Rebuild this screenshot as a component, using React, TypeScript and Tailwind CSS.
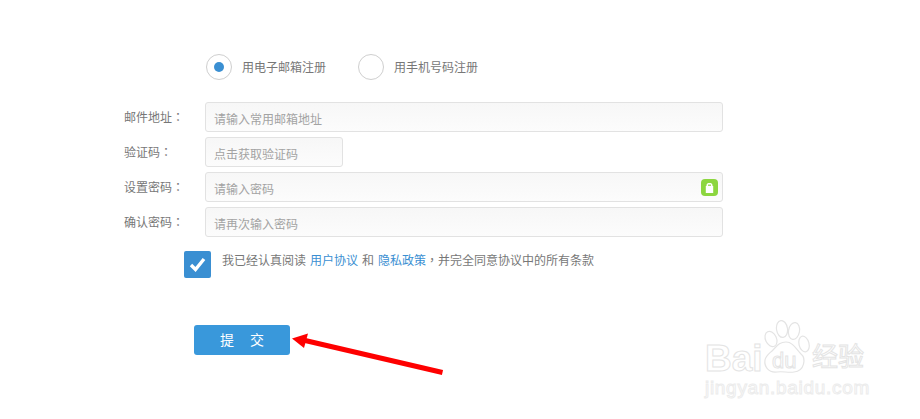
import React from 'react';

const cjk = "font-['Liberation_Sans','Noto_Sans_CJK_SC',sans-serif]";
// TC centres its full-width punctuation, the way the picture has it
const punct = "font-['Noto_Sans_CJK_TC',sans-serif]";

const fields = [
    { label: '邮件地址', placeholder: '请输入常用邮箱地址', width: 'w-[518px]' },
    { label: '验证码', placeholder: '点击获取验证码', width: 'w-[138px]' },
    { label: '设置密码', placeholder: '请输入密码', width: 'w-[518px]', lock: true },
    { label: '确认密码', placeholder: '请再次输入密码', width: 'w-[518px]' },
];

const Radio: React.FC<{ label: string; checked?: boolean; className?: string }> = ({ label, checked, className }) => (
    <div className={`flex items-center gap-[10px] ${className ?? ''}`}>
        <div className="w-[26px] h-[26px] rounded-full border border-[#cfcfcf] flex items-center justify-center">
            {checked && <div className="w-[10px] h-[10px] rounded-full bg-[#3a8fd2]" />}
        </div>
        <span className="text-xs text-[#777] mt-[2px]">{label}</span>
    </div>
);

const Watermark: React.FC = () => (
    <div className="absolute left-[704px] top-[320px] w-[180px] h-[80px] pointer-events-none font-['Liberation_Sans','Noto_Sans_CJK_SC',sans-serif] text-white">
        <span className="absolute left-[1px] top-[19px] text-[37px] leading-[40px] font-bold [-webkit-text-stroke:1px_#e4e4e4]">Bai</span>
        <svg className="absolute left-[56px] top-0" width="54" height="54" viewBox="0 0 54 54" fill="#fff" stroke="#e4e4e4" strokeWidth="1.2">
            <ellipse cx="11" cy="19" rx="5.5" ry="8" transform="rotate(-25 11 19)" />
            <ellipse cx="22" cy="9" rx="5.5" ry="8.5" transform="rotate(-8 22 9)" />
            <ellipse cx="34" cy="11" rx="5.5" ry="8.5" transform="rotate(10 34 11)" />
            <ellipse cx="44" cy="24" rx="5" ry="8" transform="rotate(-15 44 24)" />
            <path d="M26 22c7 0 10 7 15 12 5 4 4 17-7 18-6 1-11-1-17 0-9 1-13-6-12-12 1-5 5-7 8-10 4-4 6-8 13-8z" />
        </svg>
        <span className="absolute left-[68px] top-[29px] text-[22px] leading-[24px] [-webkit-text-stroke:1px_#e4e4e4]">du</span>
        <span className="absolute left-[108px] top-[20px] text-[26px] leading-[34px] whitespace-nowrap [-webkit-text-stroke:1px_#e4e4e4]">经验</span>
        <span className="absolute left-[1px] top-[57px] text-[19px] leading-[22px] whitespace-nowrap [-webkit-text-stroke:1px_#ececec] tracking-[0.7px]">jingyan.baidu.com</span>
    </div>
);

export default function App() {
    return (
        <div className={`relative w-[920px] h-[419px] bg-white overflow-hidden ${cjk}`}>
            <div className="pt-[54px] pl-[206px] flex items-center">
                <Radio label="用电子邮箱注册" checked />
                <Radio label="用手机号码注册" className="ml-[32px]" />
            </div>

            <div className="mt-[22px] flex flex-col gap-[5px]">
                {fields.map(field => (
                    <div key={field.label} className="flex items-center pl-[124px]">
                        <span className="w-[81px] text-xs text-[#777]">
                            {field.label}<span className={punct}>：</span>
                        </span>
                        <div className={`relative h-[30px] ${field.width} rounded-[3px] border border-[#e2e2e2] bg-gradient-to-b from-[#f7f7f7] to-[#fcfcfc] flex items-center pl-[8px]`}>
                            <span className="text-xs text-[#a3a3a3] mt-[5px]">{field.placeholder}</span>
                            {field.lock && (
                                <div className="absolute right-[4px] top-[6px] w-[17px] h-[17px] rounded-[4px] bg-[#8cd63f] flex items-center justify-center">
                                    <svg width="11" height="12" viewBox="0 0 11 12">
                                        <path d="M2.5 4V3.2C2.5 1.6 3.8 1 5.5 1s3 .6 3 2.2V4h.7v7H1.8V4z" fill="#fff" />
                                        <rect x="4" y="2.6" width="3" height="1.2" fill="#8cd63f" />
                                    </svg>
                                </div>
                            )}
                        </div>
                    </div>
                ))}
            </div>

            <div className="mt-[14px] pl-[184px] flex items-start">
                <div className="w-[27px] h-[27px] rounded-[2px] bg-[#3a8fd2] flex items-center justify-center">
                    <svg width="17" height="15" viewBox="0 0 17 15" fill="none">
                        <path d="M2 8l4.5 4.5L15 2" stroke="#fff" strokeWidth="3.4" />
                    </svg>
                </div>
                <p className="ml-[11px] text-xs leading-[18px] text-[#777] whitespace-nowrap">
                    我已经认真阅读<span className="ml-[4px] text-[#3a8fd2]">用户协议</span><span className="ml-[4px]">和</span><span className="ml-[4px] text-[#3a8fd2]">隐私政策</span><span className={punct}>，</span>并完全同意协议中的所有条款
                </p>
            </div>

            <div className="mt-[47px] pl-[194px]">
                <button className="w-[96px] h-[30px] rounded-[3px] bg-[#3998db] text-white text-sm flex items-center justify-center gap-[16px]">
                    <span>提</span>
                    <span>交</span>
                </button>
            </div>

            <svg className="absolute left-[285px] top-[325px]" width="170" height="60" viewBox="0 0 170 60" fill="none">
                <path d="M157.5 47.5L18 15" stroke="#fe0000" strokeWidth="5" />
                <path d="M7 13.5L23 8.5L19 23z" fill="#fe0000" />
            </svg>

            <Watermark />
        </div>
    );
}
